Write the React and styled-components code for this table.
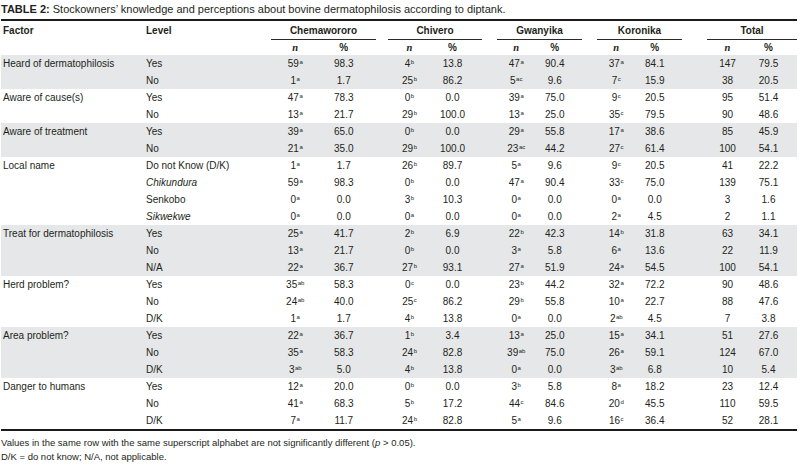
import styled, { createGlobalStyle } from "styled-components";

const GlobalStyle = createGlobalStyle`
  html, body {
    margin: 0;
    padding: 0;
    background: #ffffff;
  }
  body {
    font-family: "Liberation Sans", Arial, sans-serif;
    color: #231f20;
  }
`;

const GROUPS = [
  { name: "Chemawororo", offset: 0, width: 105 },
  { name: "Chivero", offset: 12, width: 94 },
  { name: "Gwanyika", offset: 15, width: 85 },
  { name: "Koronika", offset: 15, width: 85 },
  { name: "Total", offset: 25, width: 90 },
];

// each value: [n, superscript, percent]
const SECTIONS = [
  {
    factor: "Heard of dermatophilosis",
    shaded: true,
    rows: [
      { level: "Yes", cells: [["59", "a", "98.3"], ["4", "b", "13.8"], ["47", "a", "90.4"], ["37", "a", "84.1"], ["147", "", "79.5"]] },
      { level: "No", cells: [["1", "a", "1.7"], ["25", "b", "86.2"], ["5", "ac", "9.6"], ["7", "c", "15.9"], ["38", "", "20.5"]] },
    ],
  },
  {
    factor: "Aware of cause(s)",
    rows: [
      { level: "Yes", cells: [["47", "a", "78.3"], ["0", "b", "0.0"], ["39", "a", "75.0"], ["9", "c", "20.5"], ["95", "", "51.4"]] },
      { level: "No", cells: [["13", "a", "21.7"], ["29", "b", "100.0"], ["13", "a", "25.0"], ["35", "c", "79.5"], ["90", "", "48.6"]] },
    ],
  },
  {
    factor: "Aware of treatment",
    shaded: true,
    rows: [
      { level: "Yes", cells: [["39", "a", "65.0"], ["0", "b", "0.0"], ["29", "a", "55.8"], ["17", "a", "38.6"], ["85", "", "45.9"]] },
      { level: "No", cells: [["21", "a", "35.0"], ["29", "b", "100.0"], ["23", "ac", "44.2"], ["27", "c", "61.4"], ["100", "", "54.1"]] },
    ],
  },
  {
    factor: "Local name",
    rows: [
      { level: "Do not Know (D/K)", cells: [["1", "a", "1.7"], ["26", "b", "89.7"], ["5", "a", "9.6"], ["9", "c", "20.5"], ["41", "", "22.2"]] },
      { level: "Chikundura", italic: true, cells: [["59", "a", "98.3"], ["0", "b", "0.0"], ["47", "a", "90.4"], ["33", "c", "75.0"], ["139", "", "75.1"]] },
      { level: "Senkobo", cells: [["0", "a", "0.0"], ["3", "b", "10.3"], ["0", "a", "0.0"], ["0", "a", "0.0"], ["3", "", "1.6"]] },
      { level: "Sikwekwe", italic: true, cells: [["0", "a", "0.0"], ["0", "a", "0.0"], ["0", "a", "0.0"], ["2", "a", "4.5"], ["2", "", "1.1"]] },
    ],
  },
  {
    factor: "Treat for dermatophilosis",
    shaded: true,
    rows: [
      { level: "Yes", cells: [["25", "a", "41.7"], ["2", "b", "6.9"], ["22", "b", "42.3"], ["14", "b", "31.8"], ["63", "", "34.1"]] },
      { level: "No", cells: [["13", "a", "21.7"], ["0", "b", "0.0"], ["3", "a", "5.8"], ["6", "a", "13.6"], ["22", "", "11.9"]] },
      { level: "N/A", cells: [["22", "a", "36.7"], ["27", "b", "93.1"], ["27", "a", "51.9"], ["24", "a", "54.5"], ["100", "", "54.1"]] },
    ],
  },
  {
    factor: "Herd problem?",
    rows: [
      { level: "Yes", cells: [["35", "ab", "58.3"], ["0", "c", "0.0"], ["23", "b", "44.2"], ["32", "a", "72.2"], ["90", "", "48.6"]] },
      { level: "No", cells: [["24", "ab", "40.0"], ["25", "c", "86.2"], ["29", "b", "55.8"], ["10", "a", "22.7"], ["88", "", "47.6"]] },
      { level: "D/K", cells: [["1", "a", "1.7"], ["4", "b", "13.8"], ["0", "a", "0.0"], ["2", "ab", "4.5"], ["7", "", "3.8"]] },
    ],
  },
  {
    factor: "Area problem?",
    shaded: true,
    rows: [
      { level: "Yes", cells: [["22", "a", "36.7"], ["1", "b", "3.4"], ["13", "a", "25.0"], ["15", "a", "34.1"], ["51", "", "27.6"]] },
      { level: "No", cells: [["35", "a", "58.3"], ["24", "b", "82.8"], ["39", "ab", "75.0"], ["26", "a", "59.1"], ["124", "", "67.0"]] },
      { level: "D/K", cells: [["3", "ab", "5.0"], ["4", "b", "13.8"], ["0", "a", "0.0"], ["3", "ab", "6.8"], ["10", "", "5.4"]] },
    ],
  },
  {
    factor: "Danger to humans",
    rows: [
      { level: "Yes", cells: [["12", "a", "20.0"], ["0", "b", "0.0"], ["3", "b", "5.8"], ["8", "a", "18.2"], ["23", "", "12.4"]] },
      { level: "No", cells: [["41", "a", "68.3"], ["5", "b", "17.2"], ["44", "c", "84.6"], ["20", "d", "45.5"], ["110", "", "59.5"]] },
      { level: "D/K", cells: [["7", "a", "11.7"], ["24", "b", "82.8"], ["5", "a", "9.6"], ["16", "c", "36.4"], ["52", "", "28.1"]] },
    ],
  },
];

const Page = styled.div`
  width: 800px;
  padding: 0 3px 0 1px;
  box-sizing: border-box;
  font-size: 10px;
`;

const Caption = styled.div`
  height: 19px;
  padding-top: 2px;
  box-sizing: border-box;
  font-size: 11px;
  line-height: 15px;
  white-space: nowrap;

  b {
    font-weight: 700;
  }
`;

const Rule = styled.div`
  height: 2px;
  background: #1b1b1b;
`;

const Row = styled.div`
  display: flex;
  align-items: center;
  height: ${(p) => p.$height || 17}px;
  background: ${(p) => (p.$shaded ? "#e6e7e8" : "transparent")};
  font-weight: ${(p) => (p.$bold ? 700 : 400)};
  white-space: nowrap;
`;

const FactorCell = styled.div`
  width: 143px;
  padding-left: 2px;
  flex-shrink: 0;
`;

const LevelCell = styled.div`
  width: 125px;
  flex-shrink: 0;
  font-style: ${(p) => (p.$italic ? "italic" : "normal")};
`;

const Group = styled.div`
  display: flex;
  align-items: center;
  justify-content: center;
  flex-shrink: 0;
  box-sizing: border-box;
  height: 100%;
  width: ${(p) => p.$width}px;
  margin-left: ${(p) => p.$offset}px;
  padding-right: ${(p) => (p.$underline ? 0 : 8)}px;
  border-bottom: ${(p) => (p.$underline ? "1px solid #2a2a2a" : "none")};
`;

const NumCell = styled.div`
  flex: 1;
  text-align: center;
`;

const NHead = styled(NumCell)`
  font-family: "Liberation Serif", "Times New Roman", serif;
  font-style: italic;
  font-weight: 700;
  font-size: 10.5px;
`;

const Sup = styled.sup`
  font-size: 6px;
  line-height: 0;
  vertical-align: 3px;
  margin-left: 0.5px;
`;

const Notes = styled.div`
  padding-top: 5px;
  font-size: 9.5px;
  line-height: 14px;
`;

function DataRow({ factor, level, italic, cells, shaded }) {
  return (
    <Row $shaded={shaded}>
      <FactorCell>{factor}</FactorCell>
      <LevelCell $italic={italic}>{level}</LevelCell>
      {GROUPS.map((g, i) => (
        <Group key={g.name} $width={g.width} $offset={g.offset}>
          <NumCell>
            {cells[i][0]}
            {cells[i][1] && <Sup>{cells[i][1]}</Sup>}
          </NumCell>
          <NumCell>{cells[i][2]}</NumCell>
        </Group>
      ))}
    </Row>
  );
}

export default function App() {
  return (
    <>
      <GlobalStyle />
      <Page>
        <Caption>
          <b>TABLE 2:</b> Stockowners’ knowledge and perceptions about bovine
          dermatophilosis according to diptank.
        </Caption>
        <Rule />

        <Row $height={19} $bold>
          <FactorCell>Factor</FactorCell>
          <LevelCell>Level</LevelCell>
          {GROUPS.map((g) => (
            <Group key={g.name} $width={g.width} $offset={g.offset} $underline>
              {g.name}
            </Group>
          ))}
        </Row>
        <Row $height={15} $bold>
          <FactorCell />
          <LevelCell />
          {GROUPS.map((g) => (
            <Group key={g.name} $width={g.width} $offset={g.offset}>
              <NHead>n</NHead>
              <NumCell>%</NumCell>
            </Group>
          ))}
        </Row>

        {SECTIONS.map((s) =>
          s.rows.map((r, j) => (
            <DataRow
              key={s.factor + r.level}
              factor={j === 0 ? s.factor : ""}
              level={r.level}
              italic={r.italic}
              cells={r.cells}
              shaded={s.shaded}
            />
          ))
        )}
        <Rule />

        <Notes>
          <div>
            Values in the same row with the same superscript alphabet are not
            significantly different (<i>p</i> &gt; 0.05).
          </div>
          <div>D/K = do not know; N/A, not applicable.</div>
        </Notes>
      </Page>
    </>
  );
}
